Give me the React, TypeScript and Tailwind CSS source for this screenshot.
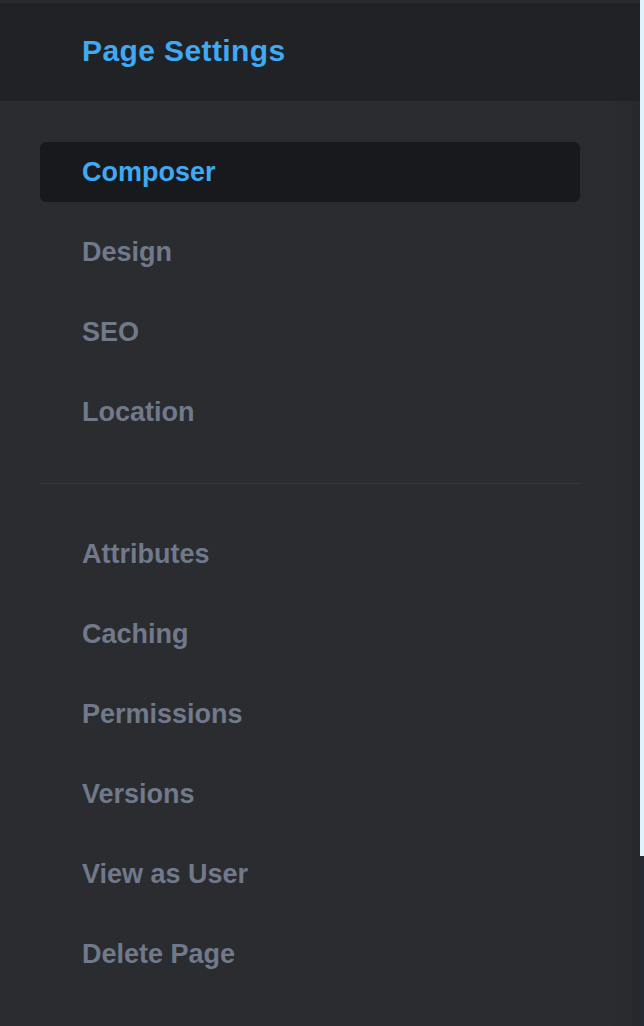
import React from 'react'

const primary = ['Composer', 'Design', 'SEO', 'Location']
const secondary = ['Attributes', 'Caching', 'Permissions', 'Versions', 'View as User', 'Delete Page']

function NavItem({ label, active }: { label: string; active?: boolean }) {
  return (
    <div
      className={`h-[60px] flex items-center rounded-md pl-[42px] text-[27px] font-bold leading-none ${
        active ? 'bg-[#18191d] text-[#40a9f3]' : 'text-[#717a8b]'
      }`}
    >
      {label}
    </div>
  )
}

export default function App() {
  return (
    <div
      className="flex w-[644px] h-[1026px] overflow-hidden bg-[#2b2c30]"
      style={{ fontFamily: '"Liberation Sans", Arial, sans-serif' }}
    >
      <div className="w-[640px] flex flex-col shadow-[inset_-28px_0_24px_-24px_rgba(0,0,0,0.12)]">
        {/* Header */}
        <div className="h-[101px] shrink-0 flex items-center bg-[#212226] border-t-[3px] border-[#2a2b2f] pl-[82px]">
          <h1 className="text-[30px] font-bold text-[#40a9f3] leading-none tracking-[0.4px] -mt-[3px]">
            Page Settings
          </h1>
        </div>

        {/* Nav */}
        <div className="flex-1 flex flex-col px-[40px] w-[620px] pt-[41px]">
          <div className="flex flex-col gap-[20px]">
            {primary.map((p, i) => (
              <NavItem key={p} label={p} active={i === 0} />
            ))}
          </div>
          <div className="h-px bg-[#37383c] mt-[41px] mb-[40px]" />
          <div className="flex flex-col gap-[20px]">
            {secondary.map((p) => (
              <NavItem key={p} label={p} />
            ))}
          </div>
        </div>
      </div>

      {/* right edge strip */}
      <div className="w-[4px] flex flex-col">
        <div className="flex-1 bg-[#e2f2fc]" />
        <div className="h-[170px] bg-[#262930]" />
      </div>
    </div>
  )
}
